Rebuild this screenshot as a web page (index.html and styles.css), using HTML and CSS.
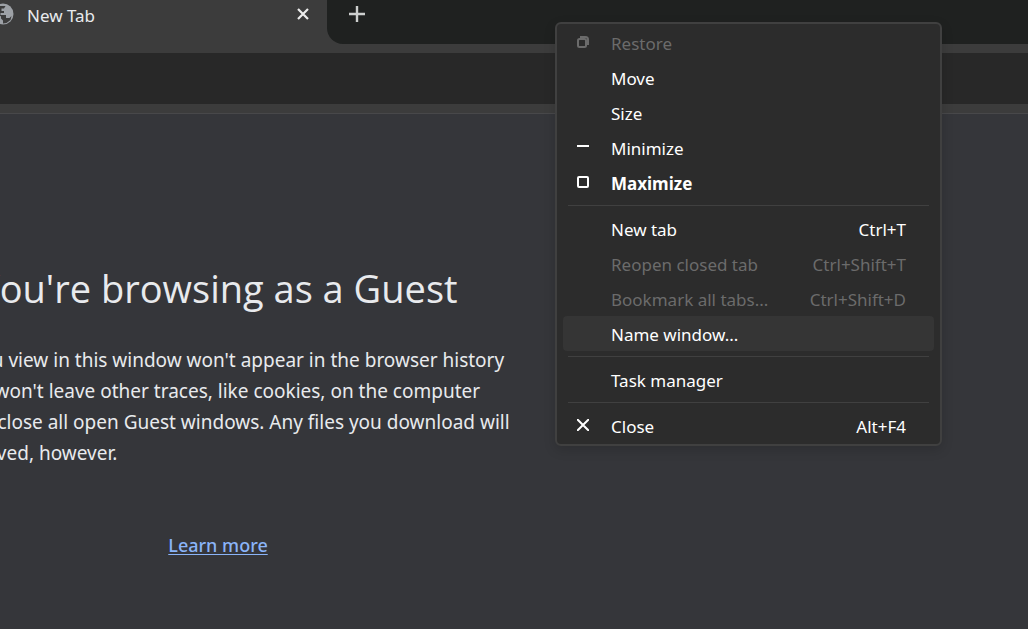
FILE: index.html
```html
<!DOCTYPE html>
<html lang="en">
<head>
<meta charset="utf-8">
<title>New Tab</title>
<link rel="stylesheet" href="styles.css">
</head>
<body>
<div class="browser">
  <header class="tab-strip">
    <div class="tab">
      <svg class="globe" viewBox="0 0 22 22" aria-hidden="true">
        <circle cx="11" cy="11" r="10.5" fill="#9da1a6"/>
        <path d="M13.500 3L12 5.500H9.500V8H12v2H8.500v2h5.500v3h3.500l2-2-1 4-4 3-3.500.5v-3l-2-2v-2L3 8.500l1-2 4-3.500z" fill="#3c3c3c"/>
      </svg>
      <span class="tab-title">New Tab</span>
      <button class="icon-button" aria-label="Close tab">
        <svg width="12" height="12" viewBox="0 0 12 12"><path d="M1 1l10 10M11 1L1 11" stroke="#ececec" stroke-width="2.200"/></svg>
      </button>
    </div>
    <div class="strip-rest">
      <button class="icon-button new-tab" aria-label="New tab">
        <svg width="16" height="16" viewBox="0 0 16 16"><path d="M8 0v16M0 8h16" stroke="#cdcfce" stroke-width="2.400"/></svg>
      </button>
    </div>
  </header>
  <div class="toolbar"></div>
  <main class="page">
    <section class="guest">
      <h1>You're browsing as a Guest</h1>
      <p>Pages you view in this window won't appear in the browser history<br>and they won't leave other traces, like cookies, on the computer<br>after you close all open Guest windows. Any files you download will<br>be preserved, however.</p>
      <a class="learn" href="#">Learn more</a>
    </section>
  </main>
  <div class="menu" role="menu">
    <button class="item" role="menuitem" disabled>
      <svg viewBox="0 0 12 12"><rect x="1" y="3" width="8" height="8" rx="1.500"/><path d="M3 1h5.500Q11 1 11 3.500V9"/></svg>
      <span>Restore</span>
    </button>
    <button class="item" role="menuitem"><span>Move</span></button>
    <button class="item" role="menuitem"><span>Size</span></button>
    <button class="item" role="menuitem">
      <svg viewBox="0 0 12 12"><path d="M0 5h12"/></svg>
      <span>Minimize</span>
    </button>
    <button class="item default" role="menuitem">
      <svg viewBox="0 0 12 12"><rect x="1" y="1" width="10" height="10" rx="1"/></svg>
      <span>Maximize</span>
    </button>
    <hr>
    <button class="item" role="menuitem"><span>New tab</span><kbd>Ctrl+T</kbd></button>
    <button class="item" role="menuitem" disabled><span>Reopen closed tab</span><kbd>Ctrl+Shift+T</kbd></button>
    <button class="item" role="menuitem" disabled><span>Bookmark all tabs...</span><kbd>Ctrl+Shift+D</kbd></button>
    <button class="item active" role="menuitem"><span>Name window...</span></button>
    <hr>
    <button class="item" role="menuitem"><span>Task manager</span></button>
    <hr>
    <button class="item" role="menuitem">
      <svg viewBox="0 0 12 12"><path d="M0 0l12 12M12 0L0 12"/></svg>
      <span>Close</span><kbd>Alt+F4</kbd>
    </button>
  </div>
</div>
</body>
</html>
```
FILE: styles.css
```css
* { box-sizing: border-box; }
body {
  margin: 0;
  background: #35363a;
  color: #e8eaed;
  font-family: "Noto Sans", "Open Sans", sans-serif;
}
button { font: inherit; color: inherit; background: none; border: 0; padding: 0; }
.browser {
  position: relative;
  display: flex;
  flex-direction: column;
  min-height: 100vh;
  overflow: hidden;
}
.tab-strip {
  display: flex;
  height: 53px;
  background: #3c3c3c;
}
.tab {
  display: flex;
  align-items: flex-start;
  flex: 0 0 327px;
  padding-right: 16px;
}
.globe { flex: none; width: 22px; height: 22px; margin: 3px 13px 0 -8px; }
.tab-title { flex: 1; font-size: 17px; line-height: 31px; }
.icon-button { display: flex; align-items: center; justify-content: center; width: 16px; height: 28px; }
.strip-rest {
  flex: 1;
  height: 44px;
  padding-left: 22px;
  background: #1f2120;
  border-bottom-left-radius: 16px;
}
.toolbar {
  height: 60px;
  background: #282828;
  border-bottom: 9px solid #3c3c3c;
}
.page { flex: 1; border-top: 1px solid #48484a; }
.guest { width: 612px; margin-left: -88px; padding-top: 146px; }
h1 { margin: 0; font-family: "Open Sans", "Noto Sans", sans-serif; font-size: 38px; font-weight: 400; line-height: 56px; text-align: center; white-space: nowrap; }
p { margin: 29px 0 0; font-size: 19px; line-height: 31px; white-space: nowrap; }
.learn {
  display: block;
  width: max-content;
  margin: 61px auto 0;
  color: #8ab4f8;
  font-size: 18px;
  font-weight: 500;
  line-height: 31px;
  text-underline-offset: 2px;
}
.menu {
  position: absolute;
  top: 22px;
  right: 86px;
  width: 387px;
  padding: 1px 6px;
  color: #fff;
  background: #2c2c2c;
  border: 2px solid #404040;
  border-radius: 6px;
  box-shadow: 0 4px 12px rgba(0, 0, 0, .15);
}
.item {
  display: grid;
  grid-template-columns: 13px 1fr auto;
  column-gap: 21px;
  align-items: center;
  width: 100%;
  height: 35px;
  padding: 1px 28px 0 14px;
  border-radius: 4px;
  font-size: 17px;
  line-height: 34px;
  text-align: left;
  white-space: nowrap;
}
.item span { grid-column: 2; padding-top: 1px; }
.item svg { grid-column: 1; grid-row: 1; width: 12px; height: 12px; margin-bottom: 3px; fill: none; stroke: currentColor; stroke-width: 2; }
.item kbd { grid-column: 3; padding-top: 1px; font: inherit; }
.item:disabled { color: #6b6b6b; }
.default { font-weight: 700; }
.active { background: #353535; }
hr { margin: 5px 5px; border: 0; border-top: 1px solid #404040; }
```
